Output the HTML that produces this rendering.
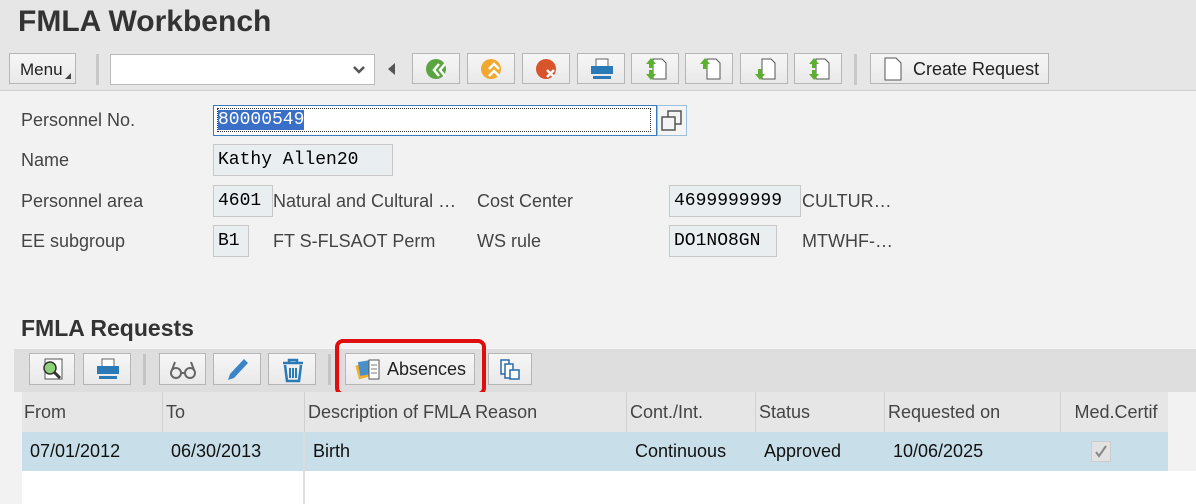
<!DOCTYPE html><html><head><style>
body{margin:0;width:1196px;height:504px;overflow:hidden;background:#f2f2f2;font-family:"Liberation Sans",sans-serif;color:#333;position:relative}
.a{position:absolute}
.hdr{left:0;top:0;width:1196px;height:90px;background:#e6e6e6;border-bottom:1px solid #cfcfcf}
.btn{position:absolute;top:53px;height:31px;border:1px solid #b5b5b5;background:linear-gradient(#f6f6f6,#e9e9e9);box-sizing:border-box}
.lbl{position:absolute;left:21px;font-size:18px;color:#444}
.box{position:absolute;height:32px;box-sizing:border-box;border:1px solid #c8c8c8;background:#e9eef1;font-family:"Liberation Mono",monospace;font-size:18px;color:#000;padding:5px 0 0 4px}
.txt{position:absolute;font-size:18px;color:#444}
.b2{position:absolute;top:353px;height:32px;border:1px solid #b5b5b5;background:linear-gradient(#f6f6f6,#e9e9e9);box-sizing:border-box}
.th{position:absolute;top:392px;height:40px;font-size:18px;color:#444;line-height:40px;border-left:1px solid #d0d0d0;padding-left:3px;box-sizing:border-box}
.td{position:absolute;top:432px;height:39px;font-size:18px;color:#111;line-height:39px}
</style></head><body>
<div class="a hdr"></div>
<div class="a" style="left:18px;top:5px;font-size:30px;font-weight:bold;color:#333">FMLA Workbench</div>
<div class="btn" style="left:9px;width:67px;font-size:17px;color:#222;padding:6px 0 0 10px">Menu<span style="position:absolute;right:4px;bottom:4px;width:0;height:0;border-left:6px solid transparent;border-bottom:6px solid #444"></span></div>
<div class="a" style="left:96px;top:54px;width:3px;height:31px;background:#c8c8c8"></div>
<div class="a" style="left:110px;top:54px;width:265px;height:31px;background:#fff;border:1px solid #bbb;box-sizing:border-box"><svg class="a" style="right:8px;top:10px" width="14" height="10"><path d="M2 2l5 5 5-5" stroke="#555" stroke-width="2.5" fill="none"/></svg></div>
<div class="a" style="left:388px;top:63px;width:0;height:0;border-top:6px solid transparent;border-bottom:6px solid transparent;border-right:7px solid #555"></div>
<div class="btn" style="left:412px;width:48px"><svg class="a" style="left:11px;top:4px" width="26" height="22"><circle cx="12" cy="11" r="10" fill="#5aa542"/><path d="M15 6l-5 6 5 6M21 6l-5 6 5 6" stroke="#fff" stroke-width="2.5" fill="none"/></svg></div>
<div class="btn" style="left:467px;width:48px"><svg class="a" style="left:11px;top:4px" width="26" height="22"><circle cx="12" cy="11" r="10" fill="#f0a830"/><path d="M10 11l5-5 5 5M10 18l5-5 5 5" stroke="#fff" stroke-width="2.5" fill="none"/></svg></div>
<div class="btn" style="left:522px;width:48px"><svg class="a" style="left:11px;top:4px" width="26" height="22"><circle cx="12" cy="11" r="10" fill="#d9542a"/><path d="M13 12l7 7M20 12l-7 7" stroke="#fff" stroke-width="2.5"/></svg></div>
<div class="btn" style="left:577px;width:48px"><svg class="a" style="left:11px;top:3px" width="26" height="24"><rect x="7" y="2" width="12" height="8" fill="#fff" stroke="#666"/><rect x="2" y="9" width="22" height="8" fill="#2a7ab8"/><rect x="4" y="19" width="18" height="3" fill="#2a7ab8"/></svg></div>
<div class="btn" style="left:631px;width:48px"><svg class="a" style="left:12px;top:2px" width="26" height="26"><path d="M9 3h9l4 4v16H9z" fill="#fff" stroke="#555"/><path d="M7 2l-5 6h3v4h4V8h3zM7 24l-5-6h3v-4h4v4h3z" fill="#5cb030"/></svg></div>
<div class="btn" style="left:685px;width:48px"><svg class="a" style="left:12px;top:2px" width="26" height="26"><path d="M9 3h9l4 4v16H9z" fill="#fff" stroke="#555"/><path d="M7 2l-5 6h3v5h4V8h3z" fill="#5cb030"/></svg></div>
<div class="btn" style="left:740px;width:48px"><svg class="a" style="left:12px;top:2px" width="26" height="26"><path d="M9 3h9l4 4v16H9z" fill="#fff" stroke="#555"/><path d="M7 24l-5-6h3v-5h4v5h3z" fill="#5cb030"/></svg></div>
<div class="btn" style="left:794px;width:48px"><svg class="a" style="left:12px;top:2px" width="26" height="26"><path d="M9 3h9l4 4v16H9z" fill="#fff" stroke="#555"/><path d="M7 2l-5 6h3v4h4V8h3zM7 24l-5-6h3v-4h4v4h3z" fill="#5cb030"/></svg></div>
<div class="a" style="left:854px;top:54px;width:3px;height:31px;background:#c8c8c8"></div>
<div class="btn" style="left:870px;width:179px;font-size:18px;color:#222;padding:5px 0 0 42px"><svg class="a" style="left:12px;top:3px" width="20" height="24"><path d="M2 1h11l5 5v17H2z" fill="#fff" stroke="#555"/></svg>Create Request</div>

<div class="lbl" style="top:110px">Personnel No.</div>
<div class="lbl" style="top:150px">Name</div>
<div class="lbl" style="top:191px">Personnel area</div>
<div class="lbl" style="top:231px">EE subgroup</div>
<div class="box" style="left:213px;top:105px;width:444px;height:31px;background:#fff;border-color:#3a7bbf;padding:2px 0 0 3px"><span style="display:inline-block;border:1px dotted #333;width:432px;height:22px;font-family:'Liberation Mono',monospace;line-height:22px"><span style="background:#3a6fc8;color:#fff">80000549</span></span></div>
<div class="a" style="left:657px;top:105px;width:30px;height:31px;border:1px solid #9cc0dc;box-sizing:border-box;background:#f4f4f4"><svg class="a" style="left:3px;top:4px" width="22" height="22"><rect x="1" y="7" width="13" height="13" fill="none" stroke="#555" stroke-width="1.5"/><path d="M7 7V1h13v13h-6" fill="none" stroke="#555" stroke-width="1.5"/></svg></div>
<div class="box" style="left:213px;top:144px;width:180px">Kathy Allen20</div>
<div class="box" style="left:213px;top:185px;width:60px">4601</div>
<div class="txt" style="left:273px;top:191px">Natural and Cultural …</div>
<div class="txt" style="left:477px;top:191px">Cost Center</div>
<div class="box" style="left:669px;top:185px;width:132px">4699999999</div>
<div class="txt" style="left:802px;top:191px">CULTUR…</div>
<div class="box" style="left:213px;top:225px;width:36px">B1</div>
<div class="txt" style="left:273px;top:231px">FT S-FLSAOT Perm</div>
<div class="txt" style="left:477px;top:231px">WS rule</div>
<div class="box" style="left:669px;top:225px;width:108px">DO1NO8GN</div>
<div class="txt" style="left:802px;top:231px">MTWHF-…</div>

<div class="a" style="left:21px;top:315px;font-size:23px;font-weight:bold;color:#333">FMLA Requests</div>
<div class="a" style="left:14px;top:349px;width:1182px;height:43px;background:#dedede"></div>
<div class="b2" style="left:29px;width:46px"><svg class="a" style="left:10px;top:3px" width="26" height="26"><rect x="5" y="2" width="17" height="20" fill="#fff" stroke="#555"/><circle cx="10" cy="11" r="6" fill="#8fd07a" stroke="#333" stroke-width="1.5"/><path d="M14 15l6 6" stroke="#333" stroke-width="3"/></svg></div>
<div class="b2" style="left:83px;width:48px"><svg class="a" style="left:11px;top:3px" width="26" height="24"><rect x="7" y="2" width="12" height="8" fill="#fff" stroke="#666"/><rect x="2" y="9" width="22" height="8" fill="#2a7ab8"/><rect x="4" y="19" width="18" height="3" fill="#2a7ab8"/></svg></div>
<div class="a" style="left:143px;top:354px;width:3px;height:31px;background:#c4c4c4"></div>
<div class="b2" style="left:159px;width:47px"><svg class="a" style="left:9px;top:6px" width="28" height="20"><circle cx="7" cy="13" r="5" fill="none" stroke="#666" stroke-width="2"/><circle cx="21" cy="13" r="5" fill="none" stroke="#666" stroke-width="2"/><path d="M12 13h4M3 10l3-8M25 10l-3-8" stroke="#666" stroke-width="2" fill="none"/></svg></div>
<div class="b2" style="left:213px;width:48px"><svg class="a" style="left:12px;top:3px" width="24" height="26"><path d="M18 2l4 4-14 15-6 2 2-6z" fill="#3a85c8"/></svg></div>
<div class="b2" style="left:268px;width:48px"><svg class="a" style="left:11px;top:3px" width="26" height="26"><path d="M3 6h20M9 6V3h8v3M5 8l2 16h12l2-16" fill="none" stroke="#2a7ab8" stroke-width="2.5"/><path d="M10 11v10M13 11v10M16 11v10" stroke="#2a7ab8" stroke-width="2"/></svg></div>
<div class="a" style="left:328px;top:354px;width:3px;height:31px;background:#c4c4c4"></div>
<div class="b2" style="left:345px;width:130px;font-size:18px;color:#222;padding:5px 0 0 41px"><svg class="a" style="left:9px;top:4px" width="28" height="24"><rect x="2" y="6" width="12" height="14" fill="#f0b030" transform="rotate(-15 8 13)"/><rect x="4" y="3" width="12" height="14" fill="#4a90c8" transform="rotate(-10 10 10)"/><rect x="14" y="2" width="10" height="19" fill="#fff" stroke="#555"/><path d="M16 7h6M16 11h6M16 15h6" stroke="#777"/></svg>Absences</div>
<div class="b2" style="left:488px;width:44px"><svg class="a" style="left:10px;top:4px" width="24" height="24"><rect x="2" y="2" width="8" height="14" fill="#fff" stroke="#2a6aa8" stroke-width="1.5"/><rect x="6" y="6" width="8" height="14" fill="#fff" stroke="#2a6aa8" stroke-width="1.5"/><rect x="11" y="12" width="9" height="9" fill="#fff" stroke="#2a6aa8" stroke-width="1.5"/></svg></div>
<div class="a" style="left:335px;top:339px;width:151px;height:57px;border:4px solid #e00d0d;border-radius:8px;box-sizing:border-box"></div>

<div class="a" style="left:22px;top:392px;width:1146px;height:40px;background:#e6e6e6"></div>
<div class="th" style="left:22px;width:140px;border-left:none;padding-left:2px">From</div>
<div class="th" style="left:162px;width:142px">To</div>
<div class="th" style="left:304px;width:322px">Description of FMLA Reason</div>
<div class="th" style="left:626px;width:129px">Cont./Int.</div>
<div class="th" style="left:755px;width:129px">Status</div>
<div class="th" style="left:884px;width:176px">Requested on</div>
<div class="th" style="left:1060px;width:108px;text-align:center">Med.Certif</div>
<div class="a" style="left:22px;top:432px;width:1146px;height:39px;background:#c8dfe9"></div>
<div class="a" style="left:22px;top:471px;width:1174px;height:33px;background:#fff"></div>
<div class="a" style="left:303px;top:432px;width:2px;height:72px;background:#dcdcdc"></div>
<div class="td" style="left:30px">07/01/2012</div>
<div class="td" style="left:171px">06/30/2013</div>
<div class="td" style="left:313px">Birth</div>
<div class="td" style="left:635px">Continuous</div>
<div class="td" style="left:764px">Approved</div>
<div class="td" style="left:893px">10/06/2025</div>
<div class="a" style="left:1091px;top:441px;width:20px;height:21px;background:#e2e2e2;border:1px solid #ccc;box-sizing:border-box"><svg width="18" height="19"><path d="M4 10l3 4 7-10" stroke="#888" stroke-width="2" fill="none"/></svg></div>
</body></html>
